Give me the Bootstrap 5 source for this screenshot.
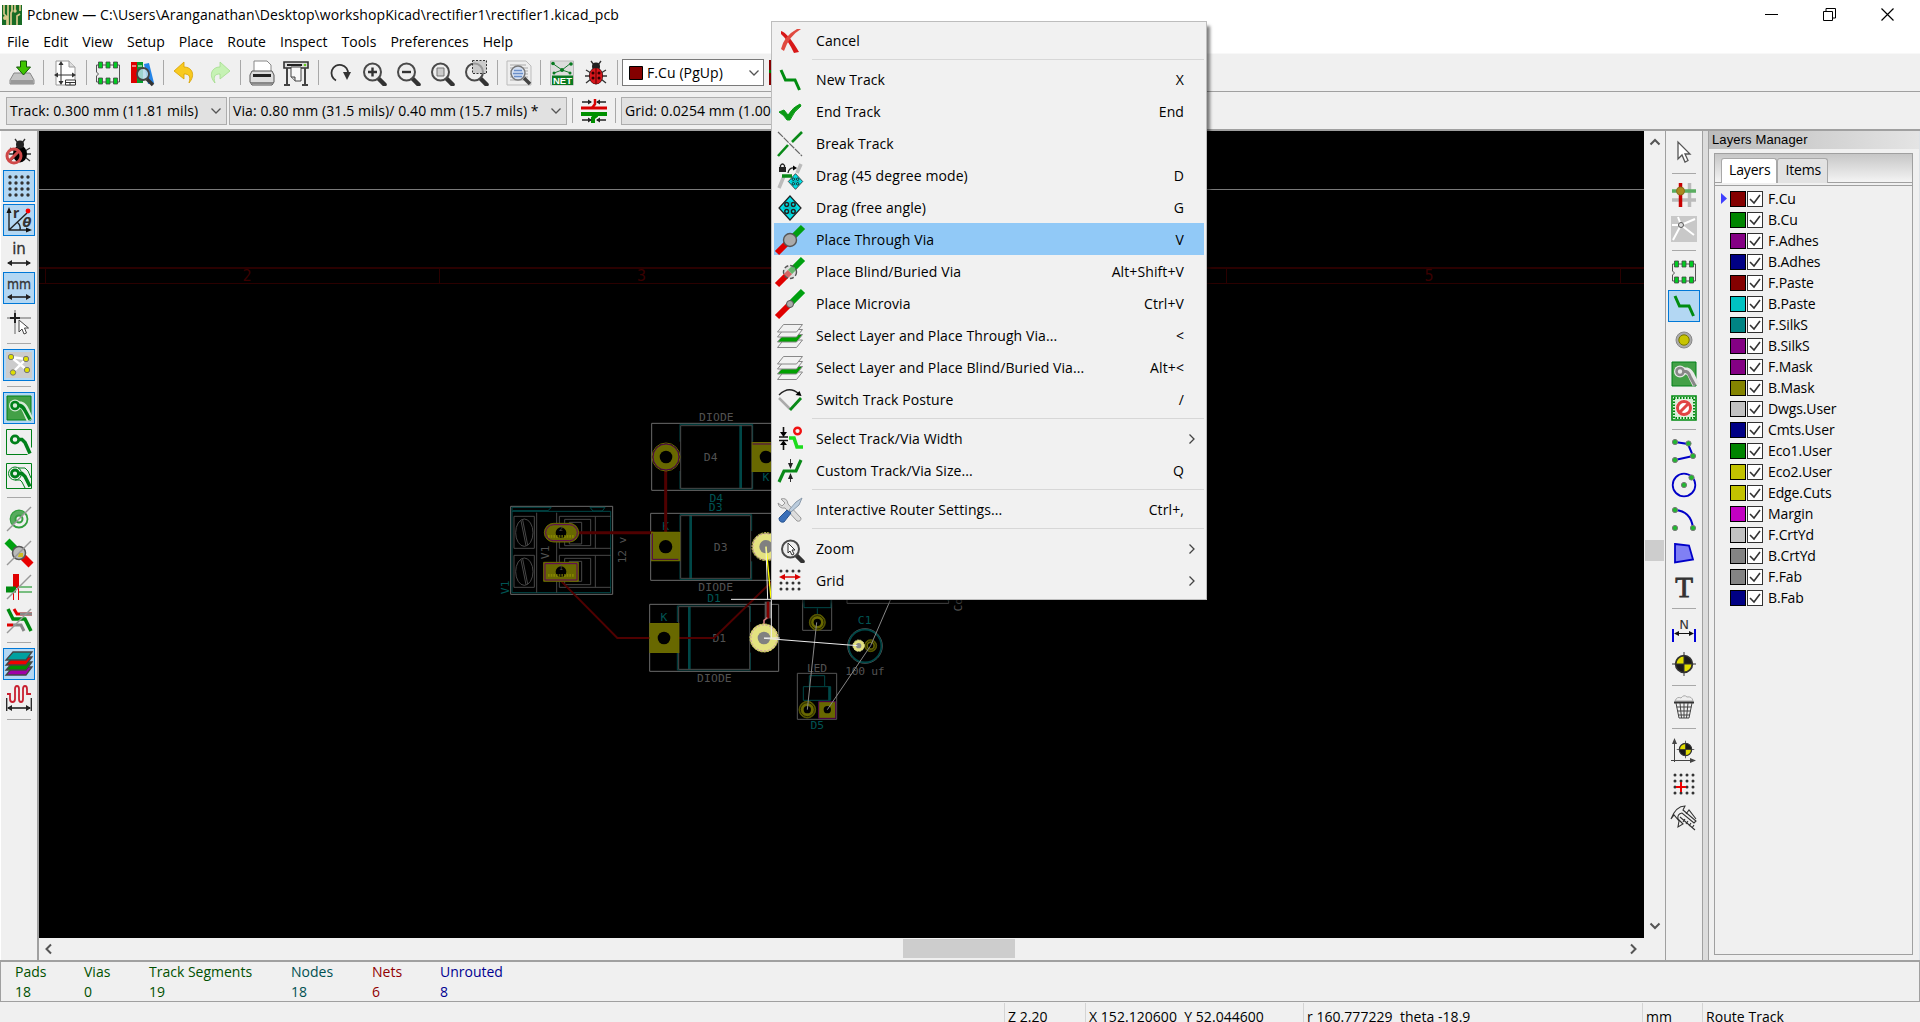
<!DOCTYPE html>
<html lang="en">
<head>
<meta charset="utf-8">
<title>Pcbnew</title>
<link href="https://cdn.jsdelivr.net/npm/bootstrap@5.3.0/dist/css/bootstrap.min.css" rel="stylesheet">
<script src="https://cdn.jsdelivr.net/npm/bootstrap@5.3.0/dist/js/bootstrap.bundle.min.js"></script>
<style>
html,body{height:1022px;overflow:hidden}
body{font:14px/20px "Open Sans","Noto Sans",sans-serif;color:#000;background:#f0f0f0;letter-spacing:-.05px}
.titlebar{height:29px;padding:0 0 0 2px}
.titlebar .caption-text{margin-left:5px;letter-spacing:.095px}
.winbtns{gap:45px;margin-right:26px}
.menubar{height:24px;gap:14px;padding:1px 0 0 7px;letter-spacing:.03px}
.tools-top{height:39px;padding:1px 0 1px 5px;border-top:1px solid #f8f8f8;border-bottom:1px solid #a0a0a0}
.tools-opts{height:39px;border-bottom:2px solid #a0a0a0;padding-left:6px;gap:2px}
.cell{width:34px;height:34px;flex:none;display:flex;align-items:center;justify-content:center}
.cell>svg,.cell>span>svg,.mi-icon>svg{width:26px;height:26px;display:block;overflow:visible}
.cell.on>span{width:32px;height:32px;background:#b3d7f3;border:1px solid #0078d7;display:flex;align-items:center;justify-content:center}
.vsep{width:9px;flex:none;height:25px;display:flex;justify-content:center}
.vsep:before{content:"";width:1px;background:#a8a8a8}
.vsep-wide{width:10px}
.hsep{height:9px;flex:none;width:24px;display:flex;align-items:center}
.hsep:before{content:"";height:1px;flex:1;background:#a8a8a8}
.combo{height:28px;background:#e1e1e1;border:1px solid #adadad;padding:0 4px 0 3px;letter-spacing:.09px}
.combo-white{background:#fff;border-color:#7a7a7a;height:27px;width:142px;padding-left:6px;padding-right:3px}
.main-area{height:829px}
.tbar-left{width:39px;padding:4px 0 0;border-right:2px solid #a0a0a0;border-left:1px solid #fff}
.tbar-right{width:38px;padding-top:4px;border-left:1px solid #a0a0a0;border-right:1px solid #a0a0a0}
.canvas-col{width:1626px}
.pcb{width:1605px;height:807px;background:#000;display:block}
.vscroll{width:21px;height:807px;padding:5px 0 6px}
.hscroll{height:21px;padding:0 10px 0 5px}
.vthumb{width:19px;height:21px;background:#cdcdcd;margin-top:392px}
.hthumb{width:112px;height:19px;background:#cdcdcd}
.sash{width:6px;background:#dcdcdc;border-right:1px solid #a0a0a0}
.layers-head{height:18px;background:linear-gradient(90deg,#bcbcbc,#e4e4e4);font:13px/17px "Liberation Sans",Arial,sans-serif;letter-spacing:.12px;padding-left:3px}
.lbook{border:1px solid #a0a0a0;margin:4px 6px 0 5px;height:802px}
.ltabs{height:29px;background:linear-gradient(#c6c6c6,#f4f4f4);border-bottom:1px solid #a0a0a0;padding:4px 0 0 6px}
.ltab{height:25px;border:1px solid #a8a8a8;border-bottom:0;border-radius:3px 3px 0 0;background:#e2e2e2;padding:1px 6px 0 7px;letter-spacing:-.15px}
.ltab.sel{background:#fff}
.lrows{border-top:1px solid #a0a0a0;margin-top:2px;padding:2px 0 0 6px}
.lrow{height:21.05px;gap:1px}
.larrow{width:8px;height:12px}
.sw{width:16px;height:16px;border:1px solid #000}
.ck{width:16px;height:16px;border:1px solid #333;background:#fff;display:block}
.lrow .lname{margin-left:4px;letter-spacing:-.12px}
.info{height:42px;border:1px solid #a0a0a0;border-top-width:2px;position:relative;padding:0 0 0 14px}
.info .grp{display:flex;flex-direction:column;line-height:20px;letter-spacing:0}
.sbar{height:20px;padding-top:1px;overflow:hidden}
.sbar>div{border-left:1px solid #d4d4d4;padding:4px 0 0 3px;height:19px;white-space:nowrap;overflow:hidden;line-height:20px;letter-spacing:.04px}
.ctx{position:absolute;left:771px;top:21px;width:436px;height:579px;background:#f1f1f1;border:1px solid #bdbdbd;padding:2px;box-shadow:4px 4px 3px -1px rgba(0,0,0,.5)}
.mi{height:32px;padding:1px 20px 0 0;letter-spacing:.1px}
.mi.hot{background:#91c9f7}
.mi-icon{width:34px;margin-right:8px;display:flex;justify-content:center;padding-right:2px}
.mi-sub{margin-right:-12px}
.msep{height:7px;display:flex;align-items:center;margin-left:38px}
.msep:before{content:"";height:1px;background:#d7d7d7;flex:1}
.pcb text{font-family:"DejaVu Sans Mono",monospace;font-size:34px;letter-spacing:0;text-anchor:middle}
</style>
</head>
<body class="d-flex flex-column">
<svg width="0" height="0" class="position-absolute">
<defs>
<symbol id="fp" viewBox="0 0 26 26"><path d="M1.5 5h23v17h-23v-6l2-2-2-2z" fill="#eee" stroke="#555"/><g fill="#0c2" stroke="#444" stroke-width=".8"><path d="M3.500 2h4v6h-4zM11 2h4v6h-4zM18.500 2h4v6h-4zM3.500 18h4v6h-4zM11 18h4v6h-4zM18.500 18h4v6h-4z"/></g></symbol>
<symbol id="mag" viewBox="0 0 26 26"><path d="M17.500 18.500l6 6" stroke="#333" stroke-width="4.500" stroke-linecap="round"/><circle cx="11.500" cy="12" r="8.500" fill="#eee" stroke="#4a4a4a" stroke-width="2"/></symbol>
<symbol id="chev" viewBox="0 0 12 12"><path d="M1.500 3.500l4.500 4.500 4.500-4.500" fill="none" stroke="#555" stroke-width="1.300"/></symbol>
<symbol id="stk" viewBox="0 0 26 26"><g stroke="#888" fill="#f1f1f1"><path d="M6.500 17h19l-6 7.500h-19z"/><path d="M6.500 11.500h19l-6 7.500h-19z" fill="#00a000"/><path d="M6.500 6.500h19l-6 7.500h-19z"/><path d="M6.500 1.500h19l-6 7.500h-19z"/></g></symbol>
<symbol id="mov" viewBox="0 0 26 26"><path d="M13 1l11 12-11 12L2 13z" fill="#00dfe6" stroke="#222" stroke-width="1.200"/><g fill="#00dfe6" stroke="#222" stroke-width="1.500"><circle cx="9.700" cy="9.500" r="1.900"/><circle cx="16.300" cy="9.500" r="1.900"/><circle cx="9.700" cy="16.500" r="1.900"/><circle cx="16.300" cy="16.500" r="1.900"/></g><path d="M13 6v14M6 13h14" stroke="#0aa" stroke-width="1"/></symbol>
<symbol id="trk" viewBox="0 0 26 26"><path d="M4 3l4.500 10h9.500l4.500 10" fill="none" stroke="#008c10" stroke-width="3"/></symbol>
<symbol id="org" viewBox="0 0 26 26"><circle cx="13" cy="13" r="8.500" fill="#1a1a1a" stroke="#333" stroke-width="1.500"/><path d="M13 13V5.500A7.500 7.500 0 0 0 5.500 13zM13 13v7.500a7.500 7.500 0 0 0 7.500-7.500z" fill="#e0dc00"/><path d="M13 1v24M1 13h24" stroke="#333"/></symbol>
<symbol id="aro" viewBox="0 0 26 26"><path d="M2 20h22" stroke="#222" stroke-width="1.600"/><path d="M1 20l5-3v6zM25 20l-5-3v6z" fill="#222"/></symbol>
<symbol id="bug" viewBox="0 0 26 26"><path d="M8 1l3 4m7-4l-3 4M3 10l5 3m15-3l-5 3M3 23l5-4m15 4l-5-4M2 16h5m12 0h5" stroke="#333" stroke-width="1.300"/><ellipse cx="13" cy="16" rx="7" ry="8.500"/><circle cx="13" cy="6.500" r="4" fill="#222"/></symbol>
<symbol id="zone" viewBox="0 0 26 26"><path d="M1 1h24v24H1z" fill="#43a047" stroke="#008018"/></symbol>
</defs></svg>

<header class="titlebar bg-white d-flex align-items-center">
  <svg width="20" height="20" viewBox="0 0 20 20"><path fill="#176b25" d="M0 0h20v20H0z"/><path d="M2 0v9l3 3v8M6 0v20M10 0v6l-1 2v12M13 0v5M18 9l-3 2v9M18 0v6" stroke="#d9c88c" stroke-width="1.700" fill="none"/><circle cx="3" cy="13" r="2" fill="#d9c88c"/><circle cx="13" cy="6" r="1.700" fill="#d9c88c"/></svg>
  <span class="caption-text">Pcbnew — C:\Users\Aranganathan\Desktop\workshopKicad\rectifier1\rectifier1.kicad_pcb</span>
  <div class="winbtns d-flex ms-auto">
    <svg width="13" height="13" viewBox="0 0 13 13"><path d="M0 6.500h13" stroke="#000"/></svg>
    <svg width="13" height="13" viewBox="0 0 13 13"><path d="M.5 3.500h9v9h-9zM3 3V.5h9.500V10H10" fill="none" stroke="#000"/></svg>
    <svg width="13" height="13" viewBox="0 0 13 13"><path d="M.5.500l12 12m0-12l-12 12" stroke="#000" stroke-width="1.200"/></svg>
  </div>
</header>
<nav class="menubar bg-white d-flex align-items-center"><span>File</span><span>Edit</span><span>View</span><span>Setup</span><span>Place</span><span>Route</span><span>Inspect</span><span>Tools</span><span>Preferences</span><span>Help</span></nav>

<div class="tools-top d-flex align-items-center">
  <div class="cell"><svg><path d="M5 13h16l4 7v4H1v-4z" fill="#c4c4c4" stroke="#888"/><path d="M2 20h22v4H2z" fill="#999"/><path d="M11.500 1h6v6h4l-7 8-7-8h4z" fill="#3fc400" stroke="#14550a"/></svg></div>
  <div class="vsep"></div>
  <div class="cell"><svg><path d="M4 1h13l6 6v18H4z" fill="#fff" stroke="#999"/><path d="M17 1v6h6" fill="#ddd" stroke="#999"/><path d="M9 3v20M4 15h18" stroke="#333"/><path d="M9 1L6.500 5h5zM9 25l-2.500-4h5zM2 15l4-2.500v5zM24 15l-4-2.500v5z" fill="#333"/><path d="M13.500 20h10v5h-10zM14 22.500h9M18 22v3" fill="#fff" stroke="#333"/></svg></div>
  <div class="vsep"></div>
  <div class="cell"><svg><use href="#fp"/></svg></div>
  <div class="cell"><svg><path d="M2 2h6v21H2z" fill="#d00"/><path d="M8 2h6v21H8z" fill="#069c2c"/><path d="M15 4l5-1 5 20-6 1z" fill="#2384e8"/><path d="M3 6h4M9 6h4" stroke="#fff"/><path d="M18 19l6 6" stroke="#333" stroke-width="3.500"/><circle cx="14" cy="14" r="6" fill="#b7dcea" fill-opacity=".85" stroke="#444" stroke-width="1.800"/></svg></div>
  <div class="vsep"></div>
  <div class="cell"><svg><path d="M2 11l10-9v5c8 0 12 8 5 16 2-7 0-9-5-9v5z" fill="#f8ca20" stroke="#d5a000" stroke-width=".8"/></svg></div>
  <div class="cell"><svg><path d="M24 11L14 2v5C6 7 2 15 9 23c-2-7 0-9 5-9v5z" fill="#c6f2b4" stroke="#a3dc8d" stroke-width=".8"/></svg></div>
  <div class="vsep"></div>
  <div class="cell"><svg><path d="M5 1h13l4 4v9H5z" fill="#fff" stroke="#888"/><path d="M3 11h20l2 4v7l-2 3H3l-2-3v-7z" fill="#ddd" stroke="#555"/><path d="M4 14h18v3H4z" fill="#222"/><path d="M2 22h22v2H2z" fill="#888"/></svg></div>
  <div class="cell"><svg><path d="M1 2h24v6H1z" fill="#ddd" stroke="#333" stroke-width="1.600"/><path d="M4 5h15" stroke="#222" stroke-width="2"/><circle cx="22" cy="5" r="1.300" fill="#6c2"/><path d="M4 8v17M22 8v17M1 25h6M19 25h6" stroke="#444" stroke-width="2"/><path d="M8 7h10v14h-6l-4-4z" fill="#f8f8f8" stroke="#444"/><path d="M8 17h4v4" fill="#ccc" stroke="#444"/></svg></div>
  <div class="vsep vsep-wide"></div>
  <div class="cell"><svg><path d="M9 20.500A8.300 8.300 0 1 1 21 14" fill="none" stroke="#333" stroke-width="1.800"/><path d="M16 12h8l-4 8z" fill="#333"/></svg></div>
  <div class="cell"><svg><use href="#mag"/><path d="M7 12h9M11.500 7.500v9" stroke="#333" stroke-width="2.400"/></svg></div>
  <div class="cell"><svg><use href="#mag"/><path d="M7 12h9" stroke="#333" stroke-width="2.400"/></svg></div>
  <div class="cell"><svg><use href="#mag"/><path d="M8 8h7v8H8z" fill="#ccc" stroke="#777"/></svg></div>
  <div class="cell"><svg><use href="#mag"/><path d="M9.500.500h14v13h-14z" fill="#bbb" fill-opacity=".7" stroke="#333" stroke-dasharray="2 1.500"/></svg></div>
  <div class="vsep"></div>
  <div class="cell"><svg><path d="M1 1h19l5 5v19H1z" fill="#eee" stroke="#bbb"/><path d="M4 5h16M4 8h18M4 11h18M4 14h18M4 17h18M4 20h14" stroke="#aaa"/><path d="M18 18l6 6" stroke="#444" stroke-width="3.500"/><circle cx="12" cy="13" r="7" fill="#d4e0f4" fill-opacity=".9" stroke="#777" stroke-width="1.400"/><path d="M8 10.500h8M7 13.500h10M8 16.500h8" stroke="#6a8ec8" stroke-width="1.500"/></svg></div>
  <div class="vsep"></div>
  <div class="cell"><svg><path d="M1.500 1h23v24h-23z" fill="#ddd" stroke="#bbb"/><path d="M3 3l10 7 9-7M5 13l8-3 9 3" fill="none" stroke="#187a30"/><g fill="#087a20"><circle cx="4" cy="3.500" r="1.800"/><circle cx="22" cy="4" r="1.800"/><circle cx="13" cy="10" r="2"/><circle cx="5" cy="13" r="1.500"/><circle cx="21" cy="13" r="1.500"/></g><path d="M3 15.500h21V25H3z" fill="#087a20"/><text x="13.500" y="24" font-size="9.500" font-weight="bold" fill="#fff" text-anchor="middle" font-family="Liberation Sans">NET</text></svg></div>
  <div class="cell"><svg><use href="#bug"/><ellipse cx="13" cy="16" rx="6.500" ry="8" fill="#d8161c"/><path d="M13 8v16" stroke="#500"/><g fill="#300"><circle cx="10" cy="13" r="1.500"/><circle cx="16" cy="13" r="1.500"/><circle cx="10" cy="18" r="1.500"/><circle cx="16" cy="18" r="1.500"/></g></svg></div>
  <div class="vsep"></div>
  <div class="combo combo-white d-flex align-items-center"><svg width="14" height="14" class="me-1"><path d="M.5.500h13v13H.5z" fill="#840000" stroke="#000"/></svg><span>F.Cu (PgUp)</span><svg class="ms-auto" width="12" height="12"><use href="#chev"/></svg></div>
  <svg width="14" height="26" class="ms-1"><path d="M1 0h10v25H1z" fill="#840000"/><path d="M1 10h10v3H1z" fill="#008400"/></svg>
</div>
<div class="tools-opts d-flex align-items-center">
  <div class="combo d-flex align-items-center" style="width:221px"><span>Track: 0.300 mm (11.81 mils)</span><svg class="ms-auto" width="12" height="12"><use href="#chev"/></svg></div>
  <div class="combo d-flex align-items-center" style="width:338px"><span>Via: 0.80 mm (31.5 mils)/ 0.40 mm (15.7 mils) *</span><svg class="ms-auto" width="12" height="12"><use href="#chev"/></svg></div>
  <div class="vsep" style="width:7px"></div>
  <div class="cell" style="width:32px"><svg><path d="M0 10h26" stroke="#d80000" stroke-width="3"/><path d="M0 16h26" stroke="#009000" stroke-width="4"/><path d="M14 1v5l-3 4" stroke="#d80000" stroke-width="2.500" fill="none"/><path d="M16 17l-4 3v5" stroke="#009000" stroke-width="4" fill="none"/><path d="M1 4h9m6 0h9M1 22h9m6 0h9" stroke="#222" stroke-width="1.300"/><path d="M11 4L7 1.500v5zM15 4l4-2.500v5zM11 22l-4-2.500v5zM15 22l4-2.500v5z" fill="#222"/></svg></div>
  <div class="vsep" style="width:7px"></div>
  <div class="combo d-flex align-items-center" style="width:250px">Grid: 0.0254 mm (1.00 mils)</div>
</div>

<main class="main-area d-flex">
  <div class="tbar-left d-flex flex-column align-items-center">
    <div class="cell"><svg><use href="#bug" x="1" y="-1"/><circle cx="8" cy="17" r="7" fill="none" stroke="#cf4848" stroke-width="3"/><path d="M3 22l10-10" stroke="#cf4848" stroke-width="3"/></svg></div>
    <div class="cell on"><span><svg><path d="M4 4h20M4 10h20M4 16h20M4 22h20" stroke="#333" stroke-width="3.400" stroke-linecap="round" stroke-dasharray="0 6"/></svg></span></div>
    <div class="cell on"><span><svg><path d="M3 3v20h20M3 23L21 6M11 15q4 3 3 8" fill="none" stroke="#222" stroke-width="1.400"/><path d="M3 0L.5 6h5zM26 23l-6-2.500v5z" fill="#111"/><circle cx="22" cy="4" r="2.400" fill="#f00"/><text x="7" y="11" font-size="14" font-weight="bold" fill="#333" font-family="Noto Sans">r</text><text x="16.500" y="20" font-size="13" font-style="italic" font-weight="bold" fill="#333" font-family="DejaVu Sans">θ</text></svg></span></div>
    <div class="cell"><svg><use href="#aro" y="2"/><text x="13" y="13" font-size="15" fill="#333" stroke="#333" stroke-width=".3" text-anchor="middle" font-family="DejaVu Sans">in</text></svg></div>
    <div class="cell on"><span><svg><use href="#aro" y="2"/><text x="13" y="14" font-size="14" textLength="24" lengthAdjust="spacingAndGlyphs" fill="#333" text-anchor="middle" stroke="#333" stroke-width=".3" font-family="DejaVu Sans">mm</text></svg></span></div>
    <div class="cell"><svg><path d="M1 9h24M9 1v24" stroke="#aaa" stroke-width="2"/><path d="M4 9h10M9 4v10" stroke="#222" stroke-width="2"/><path d="M13 11v12l3-3 2 5 2.500-1-2-5h4z" fill="#fff" stroke="#444"/></svg></div>
    <div class="hsep"></div>
    <div class="cell on"><span><svg><path d="M0 0h26v26H0z" fill="#ccc"/><path d="M5 5l15 2L7 20M5 5l16 13" stroke="#fff" stroke-width="2.400" fill="none"/><g fill="#dede00" stroke="#777"><circle cx="5" cy="5" r="2.700"/><circle cx="20" cy="7" r="2.700"/><circle cx="7" cy="20.500" r="2.700"/><circle cx="21" cy="18" r="2.700"/></g></svg></span></div>
    <div class="hsep"></div>
    <div class="cell on"><span><svg><use href="#zone"/><path d="M9 10h6q3 1 5 6l4 9" stroke="#d7ead8" stroke-width="7" fill="none"/><circle cx="9" cy="10.500" r="6" fill="#d7ead8"/><path d="M9 10.500h5q3 1 5 5l5 9" stroke="#00801a" stroke-width="3.500" fill="none"/><circle cx="9" cy="10.500" r="3.500" fill="#d7ead8" stroke="#00801a" stroke-width="2.600"/></svg></span></div>
    <div class="cell"><svg><path d="M.5.500h25v18M.5.500v25h21" fill="none" stroke="#008018"/><path d="M9 10.500h7l3 3 5 11" stroke="#00801a" stroke-width="3.500" fill="none"/><circle cx="9" cy="10.500" r="3.700" fill="#f0f0f0" stroke="#00801a" stroke-width="2.800"/></svg></div>
    <div class="cell"><svg><path d="M.5.500h25v25H.5z" fill="none" stroke="#008018"/><path d="M12 5h7l3 3 3 7M9 17h5l2 2 3 6" stroke="#00801a" fill="none"/><path d="M9 10.500h7l3 3 5 10" stroke="#00801a" stroke-width="3.500" fill="none"/><circle cx="9" cy="10.500" r="6.500" fill="none" stroke="#00801a"/><circle cx="9" cy="10.500" r="3.500" fill="#f0f0f0" stroke="#00801a" stroke-width="2.800"/></svg></div>
    <div class="hsep"></div>
    <div class="cell"><svg><circle cx="13" cy="13" r="8.500" fill="none" stroke="#339f3f" stroke-width="1.800"/><path d="M7 19A8.500 8.500 0 0 1 19 7z" fill="#57ab5f"/><circle cx="13" cy="13" r="3.500" fill="#eee" stroke="#339f3f" stroke-width="2"/><path d="M1 25L25 1" stroke="#999" stroke-width="1.400"/></svg></div>
    <div class="cell"><svg><path d="M1 1l12 12" stroke="#00a010" stroke-width="7"/><path d="M13 13l12 12" stroke="#e80000" stroke-width="7"/><circle cx="13" cy="13" r="6.500" fill="#bbb" stroke="#555" stroke-width="1.500"/><path d="M13 13h4v4h-5z" fill="#cb2"/><path d="M1 25L25 1" stroke="#999" stroke-width="1.400"/></svg></div>
    <div class="cell"><svg><path d="M10 0v14" stroke="#e00000" stroke-width="6"/><path d="M0 15.500h10" stroke="#008a10" stroke-width="6"/><path d="M12 13h14M12 18h14" stroke="#008a10"/><path d="M7.500 18v8M12.500 14v12" stroke="#e00000"/><path d="M1 25L25 1" stroke="#999" stroke-width="1.400"/></svg></div>
    <div class="cell"><svg><path d="M8 1l3 5h15M1 17h6" stroke="#e00000" stroke-width="3" fill="none"/><path d="M14 6h12M7 17h8l3 6" stroke="#888" stroke-width="3" fill="none"/><path d="M2 1l5 10h12l6 12" stroke="#008a10" stroke-width="3.500" fill="none"/><path d="M1 25L25 1" stroke="#999" stroke-width="1.400"/></svg></div>
    <div class="hsep"></div>
    <div class="cell on"><span><svg stroke="#444" stroke-width="1.300"><path d="M7 16h19l-6 8H0z" fill="#a000a8"/><path d="M7 11h19l-6 8H0z" fill="#009000"/><path d="M7 6h19l-6 8H0z" fill="#f00000"/><path d="M7 1h19l-6 8H0z" fill="#00a0a0"/></svg></span></div>
    <div class="cell"><svg><path d="M1 9h3v5q0 3 2.500 3T9 14V4q0-3 2-3t2 3v10q0 3 2 3t2-3V4q0-3 2-3t2 3v5h4" fill="none" stroke="#c82030" stroke-width="1.800"/><path d="M.7 13v13M25.300 13v13" stroke="#222" stroke-width="1.300"/><use href="#aro" y="3"/></svg></div>
    <div class="hsep"></div>
  </div>

  <div class="canvas-col">
    <div class="d-flex">
    <svg class="pcb" viewBox="39 131 1605 807">
      <path d="M38 189.500H1644" stroke="#7a7a7a"/>
      <path d="M38 268H1644" stroke="#2a0000" stroke-width="2"/><path d="M38 283.500H1644M45.500 268v15M439.500 268v15M833.500 268v15M1226.500 268v15M1620.500 268v15" stroke="#2a0000"/>
      <g fill="#3a0000"><text x="247" y="281" style="font-size:15px">2</text><text x="641.500" y="281" style="font-size:15px">3</text><text x="1429" y="281" style="font-size:15px">5</text></g>
      <g transform="translate(490 400) scale(.33333)" fill="none" stroke-width="3">
        <g stroke="#6a6a6a"><path d="M62 319h306v264H62zM485 70h400v201H485zM482 340h400v201H482zM479 613h387v201H479z"/></g>
        <g stroke="#004848"><path d="M66 578V322h118l-10 10h-106M66 334h296v244H66M300 322h45l-8 11h-28zM570 125V73h218v52M570 213v54h218v-54M570 393v-49h215v49M570 484v54h215v-54M562 666v-48h219v48M562 758v52h219v-52"/><path d="M752 75v190M602 345v192M598 618v190" stroke-width="8"/></g>
        <g stroke="#484848"><path d="M572 77h214v188H572zM572 347h210v188H572zM566 620h213v188H566z"/><path d="M72 349h61v96H72zM72 466h61v96H72zM140 338v240M200 338v240M208 349h154M208 445h154M208 466h154M208 562h154M316 349v96M316 466v96M208 375v-26M208 420v25M208 492v-26M208 540v22M224 372v-14h78v79h-78v-14M224 489v-14h78v79h-78v-14M238 372v-5h37v65h-37v-6M238 489v-5h37v60h-37"/><ellipse cx="103" cy="398" rx="26" ry="41"/><ellipse cx="103" cy="515" rx="26" ry="41"/><path d="M93 362l15 75M98 360l15 75M93 479l15 75M98 477l15 75"/></g>
        <g fill="#525252" stroke="none"><text x="679" y="62" textLength="104">DIODE</text><text x="677" y="572" textLength="104">DIODE</text><text x="673" y="845" textLength="104">DIODE</text><text x="662" y="182">D4</text><text x="692" y="452">D3</text><text x="688" y="725">D1</text><text transform="translate(407 450) rotate(-90)" textLength="80">12 v</text><text transform="translate(178 457) rotate(-90)">V1</text></g>
        <g fill="#005454" stroke="none"><text x="679" y="305">D4</text><text x="677" y="332">D3</text><text x="672" y="605">D1</text><text x="828" y="244">K</text><text x="527" y="389">K</text><text x="522" y="663">K</text><text transform="translate(58 562) rotate(-90)">V1</text></g>
        <g stroke="#500000"><path d="M527 200v200M250 398h240" stroke-width="9"/><path d="M212 542l170 172h100M560 714h112L845 545" stroke-width="6"/></g>
        <g fill="#686800" stroke="#6a6a00"><circle cx="528" cy="171" r="42" fill="none"/><circle cx="528" cy="171" r="39" stroke="#500050"/><path d="M787 128h80v86h-80zM485 397h84v85h-84zM480 671h86v86h-86z" stroke-width="4"/><path d="M788 132h60M487 400v78h78" stroke="#500050"/><rect x="163" y="370" width="103" height="56" rx="28"/><rect x="167" y="374" width="95" height="48" rx="24" stroke="#600060"/><path d="M161 487h104v57H161z"/><path d="M165 491h96v49h-96z" stroke="#600060"/></g>
        <g fill="#000"><circle cx="528" cy="171" r="19"/><circle cx="828" cy="171" r="19"/><circle cx="527" cy="440" r="20"/><circle cx="522" cy="714" r="19"/><circle cx="213" cy="398" r="16"/><circle cx="213" cy="515" r="16"/></g>
        <g fill="#555" stroke="none"><text x="213" y="393" style="font-size:20px">2</text><text x="213" y="510" style="font-size:20px">1</text></g><path d="M174 409h80M174 526h80" stroke="#999900" stroke-width="8" stroke-dasharray="5 3" opacity=".6"/>
        <path d="M834 605v50" stroke="#555" stroke-width="20"/><path d="M834 605v50" stroke="#800000" stroke-width="8"/><path d="M832 653l-10 8v20" stroke="#c97878" stroke-width="5"/>
        <g fill="#e4e280" stroke="#d8d860"><circle cx="828" cy="440" r="42" stroke="#000" fill="#e4e280" stroke-width="2"/><circle cx="828" cy="440" r="42" fill="none" stroke-dasharray="7 3"/><circle cx="822" cy="714" r="42" stroke-dasharray="7 3"/></g>
        <g fill="none" stroke="#c070c0" stroke-width="2" stroke-dasharray="6 5"><circle cx="828" cy="440" r="39"/><circle cx="822" cy="714" r="39"/></g>
        <g fill="#808080"><circle cx="828" cy="440" r="20"/><circle cx="822" cy="714" r="19"/></g>
        <path d="M828 440l15 155" stroke="#ff0" stroke-width="4"/><path d="M828 440l5 158M723 598h240M844 598v116M822 714h48" stroke="#eee"/>
      </g>
      <g transform="translate(720 560) scale(.33333)" fill="none" stroke-width="3">
        <path d="M248 60h87v151h-87zM381 60h305v70H381zM232 340h118v138H232z" stroke="#555"/>
        <path d="M252 60h81v83h-81zM386 60h298v63M292 145v18M268 378v-31h46v31M250 380h82v41h-82z" stroke="#004848"/><path d="M328 380v41" stroke="#004848" stroke-width="7"/>
        <circle cx="435" cy="258" r="52" stroke="#555"/><circle cx="435" cy="258" r="49" stroke="#004848" stroke-width="5"/>
        <g fill="#005454" stroke="none"><text x="434" y="192">C1</text><text x="292" y="506">D5</text></g><g fill="#525252" stroke="none"><text x="291" y="335" textLength="60">LED</text><text x="435" y="344" textLength="118">100 uf</text><text transform="translate(727 134) rotate(-90)">Co</text></g>
        <g fill="#686800" stroke="#555500"><circle cx="292" cy="187" r="24"/><circle cx="452" cy="257" r="18"/><circle cx="262" cy="449" r="25"/><path d="M296 425h51v50h-51z" stroke="#500050"/></g>
        <g fill="none" stroke="#000" stroke-width="2"><circle cx="292" cy="187" r="20"/><circle cx="452" cy="257" r="14"/><circle cx="262" cy="449" r="21"/></g>
        <g fill="#000"><circle cx="292" cy="187" r="11"/><circle cx="452" cy="257" r="8"/><circle cx="262" cy="449" r="11"/><circle cx="322" cy="449" r="11"/></g>
        <circle cx="416" cy="257" r="17" fill="#e4e280" stroke="#dede90" stroke-dasharray="6 3"/><circle cx="416" cy="257" r="8" fill="#888"/>
        <path d="M290 187l-28 262M512 118l-60 139-130 192" stroke="#888"/><path d="M132 235l280 22" stroke="#eee"/>
      </g>
    </svg>
    <div class="vscroll d-flex flex-column align-items-center">
      <svg width="12" height="12" class="flex-shrink-0"><path d="M1.500 8.500L6 4l4.500 4.500" fill="none" stroke="#555" stroke-width="2"/></svg>
      <div class="vthumb"></div>
      <svg width="12" height="12" class="mt-auto"><path d="M1.500 3.500L6 8l4.500-4.500" fill="none" stroke="#555" stroke-width="2"/></svg>
    </div></div>
    <div class="hscroll d-flex align-items-center">
      <svg width="10" height="12"><path d="M7 1.500L2.500 6 7 10.500" fill="none" stroke="#555" stroke-width="2"/></svg>
      <div class="hthumb" style="margin-left:849px"></div>
      <svg width="10" height="12" class="ms-auto me-3"><path d="M2 1.500L6.500 6 2 10.500" fill="none" stroke="#555" stroke-width="2"/></svg>
    </div>
  </div>

  <div class="tbar-right d-flex flex-column align-items-center">
    <div class="cell"><svg><path d="M7 3v17l4-4 3 7 3-1.500-3-6.500h5z" fill="#fff" stroke="#555" stroke-width="1.300"/></svg></div>
    <div class="hsep"></div>
    <div class="cell"><svg><path d="M18.500 1v24M1 18h24" stroke="#bbb" stroke-width="3.500"/><path d="M1 9h24" stroke="#5aad60" stroke-width="3.500"/><path d="M9.500 1v24" stroke="#c80000" stroke-width="3.500"/><circle cx="9.500" cy="9" r="4" fill="#aa8a20" stroke="#887020"/></svg></div>
    <div class="cell"><svg><path d="M0 0h26v26H0z" fill="#c8c8c8"/><path d="M10 9L7 1M10 9H1m9 0l14-6M10 9L2 24m8-15l13 10" stroke="#fff" stroke-width="2"/><circle cx="10" cy="9" r="2.500" fill="#ddd" stroke="#555"/></svg></div>
    <div class="hsep"></div>
    <div class="cell"><svg><use href="#fp"/></svg></div>
    <div class="cell on"><span><svg><use href="#trk"/></svg></span></div>
    <div class="cell"><svg><circle cx="13" cy="13" r="8" fill="#aaa" stroke="#888"/><circle cx="13" cy="13" r="5.200" fill="#c8c400" stroke="#777700"/></svg></div>
    <div class="cell"><svg><use href="#zone"/><path d="M9 10h7q3 1 5 6l4 8" stroke="#e8e8e8" stroke-width="7" fill="none"/><circle cx="9" cy="10.500" r="6" fill="#e8e8e8"/><path d="M9 10.500h6q3 1 4 5l5 9" stroke="#888" stroke-width="3" fill="none"/><circle cx="9" cy="10.500" r="3.500" fill="#e8e8e8" stroke="#888" stroke-width="2.600"/></svg></div>
    <div class="cell"><svg><path d="M1 1h24v24H1z" fill="#d8f0d8" stroke="#008a10" stroke-width="1.600"/><path d="M3 3h20v20H3z" fill="none" stroke="#008a10" stroke-width="2" stroke-dasharray="1.500 1.500"/><circle cx="13" cy="13" r="8.500" fill="#fff"/><circle cx="13" cy="13" r="6.500" fill="none" stroke="#e04444" stroke-width="3"/><path d="M8.500 17.500l9-9" stroke="#e04444" stroke-width="3"/></svg></div>
    <div class="hsep"></div>
    <div class="cell"><svg><path d="M4 4l13 2 5 12-18 4" fill="none" stroke="#0000c8" stroke-width="2"/><g fill="#22b830" stroke="#777"><circle cx="4" cy="4" r="2.600"/><circle cx="17.500" cy="5.500" r="2.600"/><circle cx="22" cy="18" r="2.600"/><circle cx="4" cy="22" r="2.600"/></g></svg></div>
    <div class="cell"><svg><circle cx="13" cy="13" r="11.300" fill="none" stroke="#0000c8" stroke-width="1.800"/><g fill="#22b830" stroke="#777"><circle cx="13" cy="13" r="2.600"/><circle cx="20.500" cy="5.500" r="2.600"/></g></svg></div>
    <div class="cell"><svg><path d="M4 4q16 1 18 18" fill="none" stroke="#0000c8" stroke-width="2"/><g fill="#22b830" stroke="#777"><circle cx="4" cy="4" r="2.600"/><circle cx="22" cy="22" r="2.600"/><circle cx="4" cy="22" r="2.600"/></g></svg></div>
    <div class="cell"><svg><path d="M4 4l14 1.500 4 14L4 22.500z" fill="#8080f4" stroke="#0000c8" stroke-width="1.800"/></svg></div>
    <div class="cell"><svg><text x="13" y="23" font-size="29" fill="#333" stroke="#333" stroke-width=".9" text-anchor="middle" font-family="Liberation Serif">T</text></svg></div>
    <div class="hsep"></div>
    <div class="cell"><svg><path d="M2 12v13M24 12v13" stroke="#0000d8" stroke-width="2"/><path d="M5 16.500h16" stroke="#111"/><path d="M3 16.500l5-2.500v5zM23 16.500l-5-2.500v5z" fill="#111"/><text x="13" y="12" font-size="13" fill="#333" text-anchor="middle" font-family="DejaVu Sans">N</text></svg></div>
    <div class="cell"><svg><use href="#org"/></svg></div>
    <div class="hsep"></div>
    <div class="cell"><svg><path d="M4 7q2-5 6-3 3-4 6-1 5-1 6 4z" fill="#eee" stroke="#aaa"/><path d="M3 8.500h20" stroke="#333" stroke-width="2"/><path d="M5 9l3 15h10l3-15M9 9l1.500 15M13 9v15M17 9l-1.500 15M5.500 13h15M6.500 17h13M7 21h12" fill="none" stroke="#444"/></svg></div>
    <div class="hsep"></div>
    <div class="cell"><svg><path d="M3.500 4v21M0 23.500h22" stroke="#444"/><path d="M3.500 1L1 7h5zM25 23.500l-6-2.500v5z" fill="#444"/><svg x="5" y="3" width="19" height="19"><use href="#org"/></svg></svg></div>
    <div class="cell"><svg><path d="M4 4h20M4 10h20M4 16h20M4 22h20" stroke="#333" stroke-width="3" stroke-linecap="round" stroke-dasharray="0 6"/><path d="M5 16h10M10 11v10" stroke="#e00" stroke-width="2"/></svg></div>
    <div class="cell"><svg><path d="M0 14q5-13 14-13l-2 4 13 11-2 2L11 8q-5 1-4 6l5 5-5 3 1-6-5-6zM15 9l3-4 7 9M9 12l15 13M14 14l-2 3m5-1l-2 3m5-1l-2 3m5-1l-2 3" fill="none" stroke="#333" stroke-width="1.100"/></svg></div>
  </div>
  <div class="sash"></div>
  <aside class="flex-grow-1 border-end">
    <div class="layers-head">Layers Manager</div>
    <div class="lbook">
      <div class="ltabs d-flex"><div class="ltab sel">Layers</div><div class="ltab">Items</div></div>
      <div class="lrows" id="rows"></div>
    </div>
  </aside>
</main>

<section class="info d-flex">
  <div class="grp" style="color:#005000;width:69px"><span>Pads</span><span>18</span></div>
  <div class="grp" style="color:#005000;width:65px"><span>Vias</span><span>0</span></div>
  <div class="grp" style="color:#005000;width:142px"><span>Track Segments</span><span>19</span></div>
  <div class="grp" style="color:#005050;width:81px"><span>Nodes</span><span>18</span></div>
  <div class="grp" style="color:#900000;width:68px"><span>Nets</span><span>6</span></div>
  <div class="grp" style="color:#000090"><span>Unrouted</span><span>8</span></div>
</section>
<footer class="sbar d-flex">
  <div style="width:1004px" class="border-0"></div><div style="width:81px">Z 2.20</div><div style="width:218px">X 152.120600&nbsp; Y 52.044600</div><div style="width:339px">r 160.777229&nbsp; theta -18.9</div><div style="width:60px">mm</div><div class="flex-grow-1">Route Track</div>
</footer>

<div class="ctx">
  <div class="mi d-flex align-items-center"><span class="mi-icon"><svg><path d="M4 3q7 2 18 21l-5 1Q11 12 4 6z" fill="#d81818"/><path d="M24 1Q12 8 7 23l-3-2Q7 8 20 1z" fill="#e04a40"/></svg></span>Cancel</div>
  <div class="msep"></div>
  <div class="mi d-flex align-items-center"><span class="mi-icon"><svg><use href="#trk"/></svg></span>New Track<span class="ms-auto">X</span></div>
  <div class="mi d-flex align-items-center"><span class="mi-icon"><svg><path d="M2 13l5-2 4 5Q16 8 23 5l1 2q-7 5-11 14h-3q-3-5-8-8z" fill="#0a9a14" stroke="#0a9a14"/></svg></span>End Track<span class="ms-auto">End</span></div>
  <div class="mi d-flex align-items-center"><span class="mi-icon"><svg><path d="M1 25l10-11M15 11L25 1" stroke="#098a18" stroke-width="2.600"/><path d="M1 1l24 24" stroke="#666" stroke-width="1.200" stroke-dasharray="7 1"/></svg></span>Break Track</div>
  <div class="mi d-flex align-items-center"><span class="mi-icon"><svg><path d="M24 1l-4 9M7 13L2 25" stroke="#bbb" stroke-width="3.500"/><path d="M5 13h10" stroke="#098a18" stroke-width="3.500"/><path d="M2 4h7v5H2z" fill="#222"/><path d="M3.500 5V2.500q2-3 4 0V5M11 10q1-6 7-5" fill="none" stroke="#222" stroke-width="1.300"/><path d="M20 5l-4-2.500v5z"/><svg x="10" y="10" width="17" height="17"><use href="#mov"/></svg></svg></span>Drag (45 degree mode)<span class="ms-auto">D</span></div>
  <div class="mi d-flex align-items-center"><span class="mi-icon"><svg><use href="#mov"/></svg></span>Drag (free angle)<span class="ms-auto">G</span></div>
  <div class="mi hot d-flex align-items-center"><span class="mi-icon"><svg><path d="M0 26L13 13" stroke="#e00000" stroke-width="6"/><path d="M13 13L26 0" stroke="#00a010" stroke-width="6"/><circle cx="13" cy="13" r="6.500" fill="#aaa" stroke="#555" stroke-width="1.400"/></svg></span>Place Through Via<span class="ms-auto">V</span></div>
  <div class="mi d-flex align-items-center"><span class="mi-icon"><svg><path d="M0 26L13 13" stroke="#e00000" stroke-width="6"/><path d="M13 13L26 0" stroke="#00a010" stroke-width="6"/><circle cx="13" cy="13" r="6.500" fill="#ccc" fill-opacity=".5" stroke="#555" stroke-width="1.400" stroke-dasharray="4 2"/></svg></span>Place Blind/Buried Via<span class="ms-auto">Alt+Shift+V</span></div>
  <div class="mi d-flex align-items-center"><span class="mi-icon"><svg><path d="M0 26L13 13" stroke="#e00000" stroke-width="6"/><path d="M13 13L26 0" stroke="#00a010" stroke-width="6"/><circle cx="13" cy="13" r="3.500" fill="#aaa" stroke="#555"/></svg></span>Place Microvia<span class="ms-auto">Ctrl+V</span></div>
  <div class="mi d-flex align-items-center"><span class="mi-icon"><svg><use href="#stk"/></svg></span>Select Layer and Place Through Via...<span class="ms-auto">&lt;</span></div>
  <div class="mi d-flex align-items-center"><span class="mi-icon"><svg><use href="#stk"/></svg></span>Select Layer and Place Blind/Buried Via...<span class="ms-auto">Alt+&lt;</span></div>
  <div class="mi d-flex align-items-center"><span class="mi-icon"><svg><path d="M2 11l11 11" stroke="#aaa" stroke-width="2.500"/><path d="M13 23l11-12" stroke="#098a18" stroke-width="2.800"/><path d="M2 8q10-10 20-1" fill="none" stroke="#222" stroke-width="1.400"/><path d="M24.500 9l-6-1 4-4z"/></svg></span>Switch Track Posture<span class="ms-auto">/</span></div>
  <div class="msep"></div>
  <div class="mi d-flex align-items-center"><span class="mi-icon"><svg><path d="M2 11h9M2 14.500h9M6.500 1v8M6.500 17v7" stroke="#111" stroke-width="1.600"/><path d="M6.500 11L3 6h7zM6.500 14.500L3 19h7z"/><circle cx="20.500" cy="5" r="3.300" fill="none" stroke="#f01010" stroke-width="2.400"/><path d="M12 12h5l3 9h6" fill="none" stroke="#1ddc1d" stroke-width="3.600"/></svg></span>Select Track/Via Width<svg width="8" height="12" class="ms-auto mi-sub"><path d="M1.500 1.500L6 6l-4.500 4.500" fill="none" stroke="#444" stroke-width="1.300"/></svg></div>
  <div class="mi d-flex align-items-center"><span class="mi-icon"><svg><path d="M2 24L7 13h12l5-11" fill="none" stroke="#098a18" stroke-width="3.200"/><path d="M13.500 1v8M13.500 17v7" stroke="#333"/><path d="M13.500 11L11 5h5zM13.500 15l-2.500 6h5z" fill="#222"/></svg></span>Custom Track/Via Size...<span class="ms-auto">Q</span></div>
  <div class="msep"></div>
  <div class="mi d-flex align-items-center"><span class="mi-icon"><svg><path d="M4 2q6-2 7 5l13 14q0 4-4 3L8 11q-6 1-7-5l4 3 3-3z" fill="#ddd" stroke="#999"/><path d="M25 1l-3 7-8 7-2-2 7-8z" fill="#bcd" stroke="#89a"/><path d="M2 21l8-8 4 3-7 9q-5 1-5-4z" fill="#3a6fb8" stroke="#2a5590"/></svg></span>Interactive Router Settings...<span class="ms-auto">Ctrl+,</span></div>
  <div class="msep"></div>
  <div class="mi d-flex align-items-center"><span class="mi-icon"><svg><use href="#mag" x="2" y="1"/><path d="M11 7v10l2-2 2 4 2-1-2-4h3z" fill="#fff" stroke="#333"/></svg></span>Zoom<svg width="8" height="12" class="ms-auto mi-sub"><path d="M1.500 1.500L6 6l-4.500 4.500" fill="none" stroke="#444" stroke-width="1.300"/></svg></div>
  <div class="mi d-flex align-items-center"><span class="mi-icon"><svg><path d="M4 3h20M4 15h20M4 21h20" stroke="#333" stroke-width="3" stroke-linecap="round" stroke-dasharray="0 6"/><path d="M4 9h18" stroke="#d80000" stroke-width="1.500"/><path d="M2 9l6-3v6zM24 9l-6-3v6z" fill="#d80000"/></svg></span>Grid<svg width="8" height="12" class="ms-auto mi-sub"><path d="M1.500 1.500L6 6l-4.500 4.500" fill="none" stroke="#444" stroke-width="1.300"/></svg></div>
</div>

<script>
// Board layers with their display colours
const layers=[["F.Cu","#840000"],["B.Cu","#008400"],["F.Adhes","#840084"],["B.Adhes","#000084"],["F.Paste","#840000"],["B.Paste","#00c2c2"],["F.SilkS","#008484"],["B.SilkS","#840084"],["F.Mask","#840084"],["B.Mask","#848400"],["Dwgs.User","#c2c2c2"],["Cmts.User","#000084"],["Eco1.User","#008400"],["Eco2.User","#c2c200"],["Edge.Cuts","#c2c200"],["Margin","#c200c2"],["F.CrtYd","#c2c2c2"],["B.CrtYd","#848484"],["F.Fab","#848484"],["B.Fab","#000084"]];
document.getElementById("rows").innerHTML=layers.map(([n,c],i)=>`<div class="lrow d-flex align-items-center"><svg class="larrow"><path d="${i?"":"M0 0l6 5.500L0 11z"}" fill="#4040ff"/></svg><span class="sw" style="background:${c}"></span><svg class="ck"><path d="M2 7l4 4 6-8" fill="none" stroke="#333" stroke-width="1.600"/></svg><span class="lname">${n}</span></div>`).join("");
</script>
</body>
</html>
